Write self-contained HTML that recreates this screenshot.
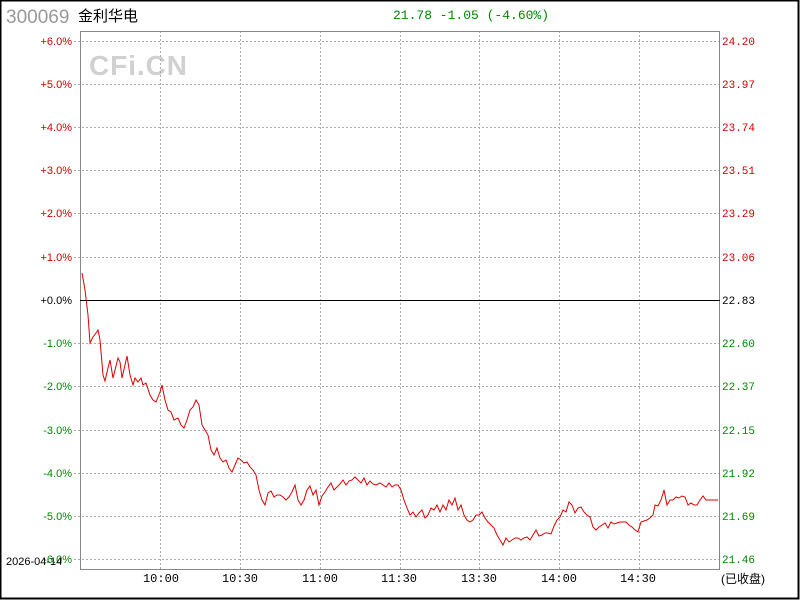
<!DOCTYPE html>
<html><head><meta charset="utf-8"><style>
html,body{margin:0;padding:0;background:#fff;}
svg{display:block;}
</style></head><body>
<svg width="800" height="600" xmlns="http://www.w3.org/2000/svg">
<rect x="0.5" y="0.5" width="798" height="598" fill="#fff" stroke="#000" stroke-width="2"/>
<text x="6" y="23" font-family="Liberation Sans, sans-serif" font-size="19" fill="#999">300069</text>
<text x="78" y="21" font-family="Liberation Sans, 'Noto Sans CJK SC', sans-serif" font-size="15" fill="#000">金利华电</text>
<text x="393" y="19" font-family="Liberation Mono, monospace" font-size="13" fill="#080">21.78 -1.05 (-4.60%)</text>
<text x="89" y="75" font-family="Liberation Sans, sans-serif" font-size="28" font-weight="bold" fill="#d0d0d0" textLength="98">CFi.CN</text>
<g stroke="#aaa" stroke-dasharray="2,2" stroke-width="1">
<line x1="74" y1="41.5" x2="719" y2="41.5"/><line x1="74" y1="84.5" x2="719" y2="84.5"/><line x1="74" y1="127.5" x2="719" y2="127.5"/><line x1="74" y1="170.5" x2="719" y2="170.5"/><line x1="74" y1="213.5" x2="719" y2="213.5"/><line x1="74" y1="257.5" x2="719" y2="257.5"/>
<line x1="74" y1="343.5" x2="719" y2="343.5"/><line x1="74" y1="386.5" x2="719" y2="386.5"/><line x1="74" y1="430.5" x2="719" y2="430.5"/><line x1="74" y1="473.5" x2="719" y2="473.5"/><line x1="74" y1="516.5" x2="719" y2="516.5"/><line x1="74" y1="559.5" x2="719" y2="559.5"/>
<line x1="160.5" y1="31" x2="160.5" y2="569"/><line x1="240.5" y1="31" x2="240.5" y2="569"/><line x1="320.5" y1="31" x2="320.5" y2="569"/><line x1="400.5" y1="31" x2="400.5" y2="569"/><line x1="479.5" y1="31" x2="479.5" y2="569"/><line x1="559.5" y1="31" x2="559.5" y2="569"/><line x1="639.5" y1="31" x2="639.5" y2="569"/>
</g>
<rect x="80.5" y="31.5" width="639" height="538" fill="none" stroke="#888" stroke-width="1"/>
<line x1="80" y1="300.5" x2="720" y2="300.5" stroke="#000" stroke-width="1"/>
<polyline fill="none" stroke="#d00" stroke-width="1" points="82,273 85,290 88,315 90,343 93,337 96,333 98,330 100,340 103,375 105,381 108,368 110,360 113,378 115,370 118,358 120,362 122,378 125,365 127,356 130,375 133,385 135,378 138,382 141,378 143,385 146,383 150,395 153,400 156,402 160,392 162,385 165,400 168,410 171,412 174,420 178,418 181,425 184,428 187,420 190,410 193,407 196,400 199,405 202,425 205,430 208,435 211,450 214,455 217,448 220,458 223,462 226,460 229,468 232,472 235,465 238,458 241,460 244,463 247,462 250,467 253,470 256,475 259,490 262,500 265,505 268,493 271,491 274,497 277,495 280,495 283,497 286,500 289,497 292,492 295,485 298,500 301,505 304,500 307,490 310,486 313,495 316,490 319,505 322,496 325,492 328,487 331,483 334,490 337,487 340,484 343,480 346,485 349,481 352,480 355,477 358,480 361,483 364,478 367,485 370,481 373,484 376,485 380,483 383,485 386,487 389,483 392,487 395,485 398,485 401,490 404,500 407,508 410,515 413,512 416,517 419,513 422,510 425,518 428,515 431,508 434,510 437,505 440,512 443,505 446,510 449,500 452,505 455,498 458,510 461,505 464,515 467,520 470,522 473,520 476,515 479,515 482,512 485,518 488,522 491,525 494,528 497,535 500,540 503,545 506,538 509,542 512,540 515,538 518,538 521,540 524,538 527,537 530,540 533,535 536,530 539,536 542,535 545,533 548,533 551,534 554,526 557,520 560,517 563,510 566,512 569,502 572,505 575,513 578,508 581,507 584,512 587,515 590,517 593,527 596,530 599,527 602,525 605,523 608,528 611,522 614,524 617,523 620,522 623,522 626,522 629,525 632,527 635,530 638,532 641,522 644,521 647,520 650,518 653,515 655,505 658,506 661,500 664,490 667,505 670,500 673,500 676,497 679,498 682,496 685,497 688,505 691,503 694,505 697,505 700,500 703,496 706,500 709,500 712,500 718,500"/>
<g font-family="Liberation Sans, sans-serif" font-size="11" text-anchor="end">
<text x="72" y="45" fill="#c00">+6.0%</text><text x="72" y="88" fill="#c00">+5.0%</text><text x="72" y="131" fill="#c00">+4.0%</text><text x="72" y="174" fill="#c00">+3.0%</text><text x="72" y="217" fill="#c00">+2.0%</text><text x="72" y="261" fill="#c00">+1.0%</text>
<text x="72" y="304" fill="#000">+0.0%</text>
<text x="72" y="347" fill="#080">-1.0%</text><text x="72" y="390" fill="#080">-2.0%</text><text x="72" y="434" fill="#080">-3.0%</text><text x="72" y="477" fill="#080">-4.0%</text><text x="72" y="520" fill="#080">-5.0%</text><text x="72" y="563" fill="#080">-6.0%</text>
</g>
<text x="6" y="565" font-family="Liberation Sans, sans-serif" font-size="11" fill="#000">2026-04-14</text>
<g font-family="Liberation Mono, monospace" font-size="11">
<text x="722" y="45" fill="#c00">24.20</text><text x="722" y="88" fill="#c00">23.97</text><text x="722" y="131" fill="#c00">23.74</text><text x="722" y="174" fill="#c00">23.51</text><text x="722" y="217" fill="#c00">23.29</text><text x="722" y="261" fill="#c00">23.06</text>
<text x="722" y="304" fill="#000">22.83</text>
<text x="722" y="347" fill="#080">22.60</text><text x="722" y="390" fill="#080">22.37</text><text x="722" y="434" fill="#080">22.15</text><text x="722" y="477" fill="#080">21.92</text><text x="722" y="520" fill="#080">21.69</text><text x="722" y="563" fill="#080">21.46</text>
</g>
<g font-family="Liberation Mono, monospace" font-size="12" fill="#000" text-anchor="middle">
<text x="161" y="582">10:00</text><text x="240" y="582">10:30</text><text x="320" y="582">11:00</text><text x="399" y="582">11:30</text><text x="479" y="582">13:30</text><text x="559" y="582">14:00</text><text x="638" y="582">14:30</text>
</g>
<text x="721" y="583" font-family="Liberation Sans, 'Noto Sans CJK SC', sans-serif" font-size="12" fill="#000">(已收盘)</text>
</svg>
</body></html>
